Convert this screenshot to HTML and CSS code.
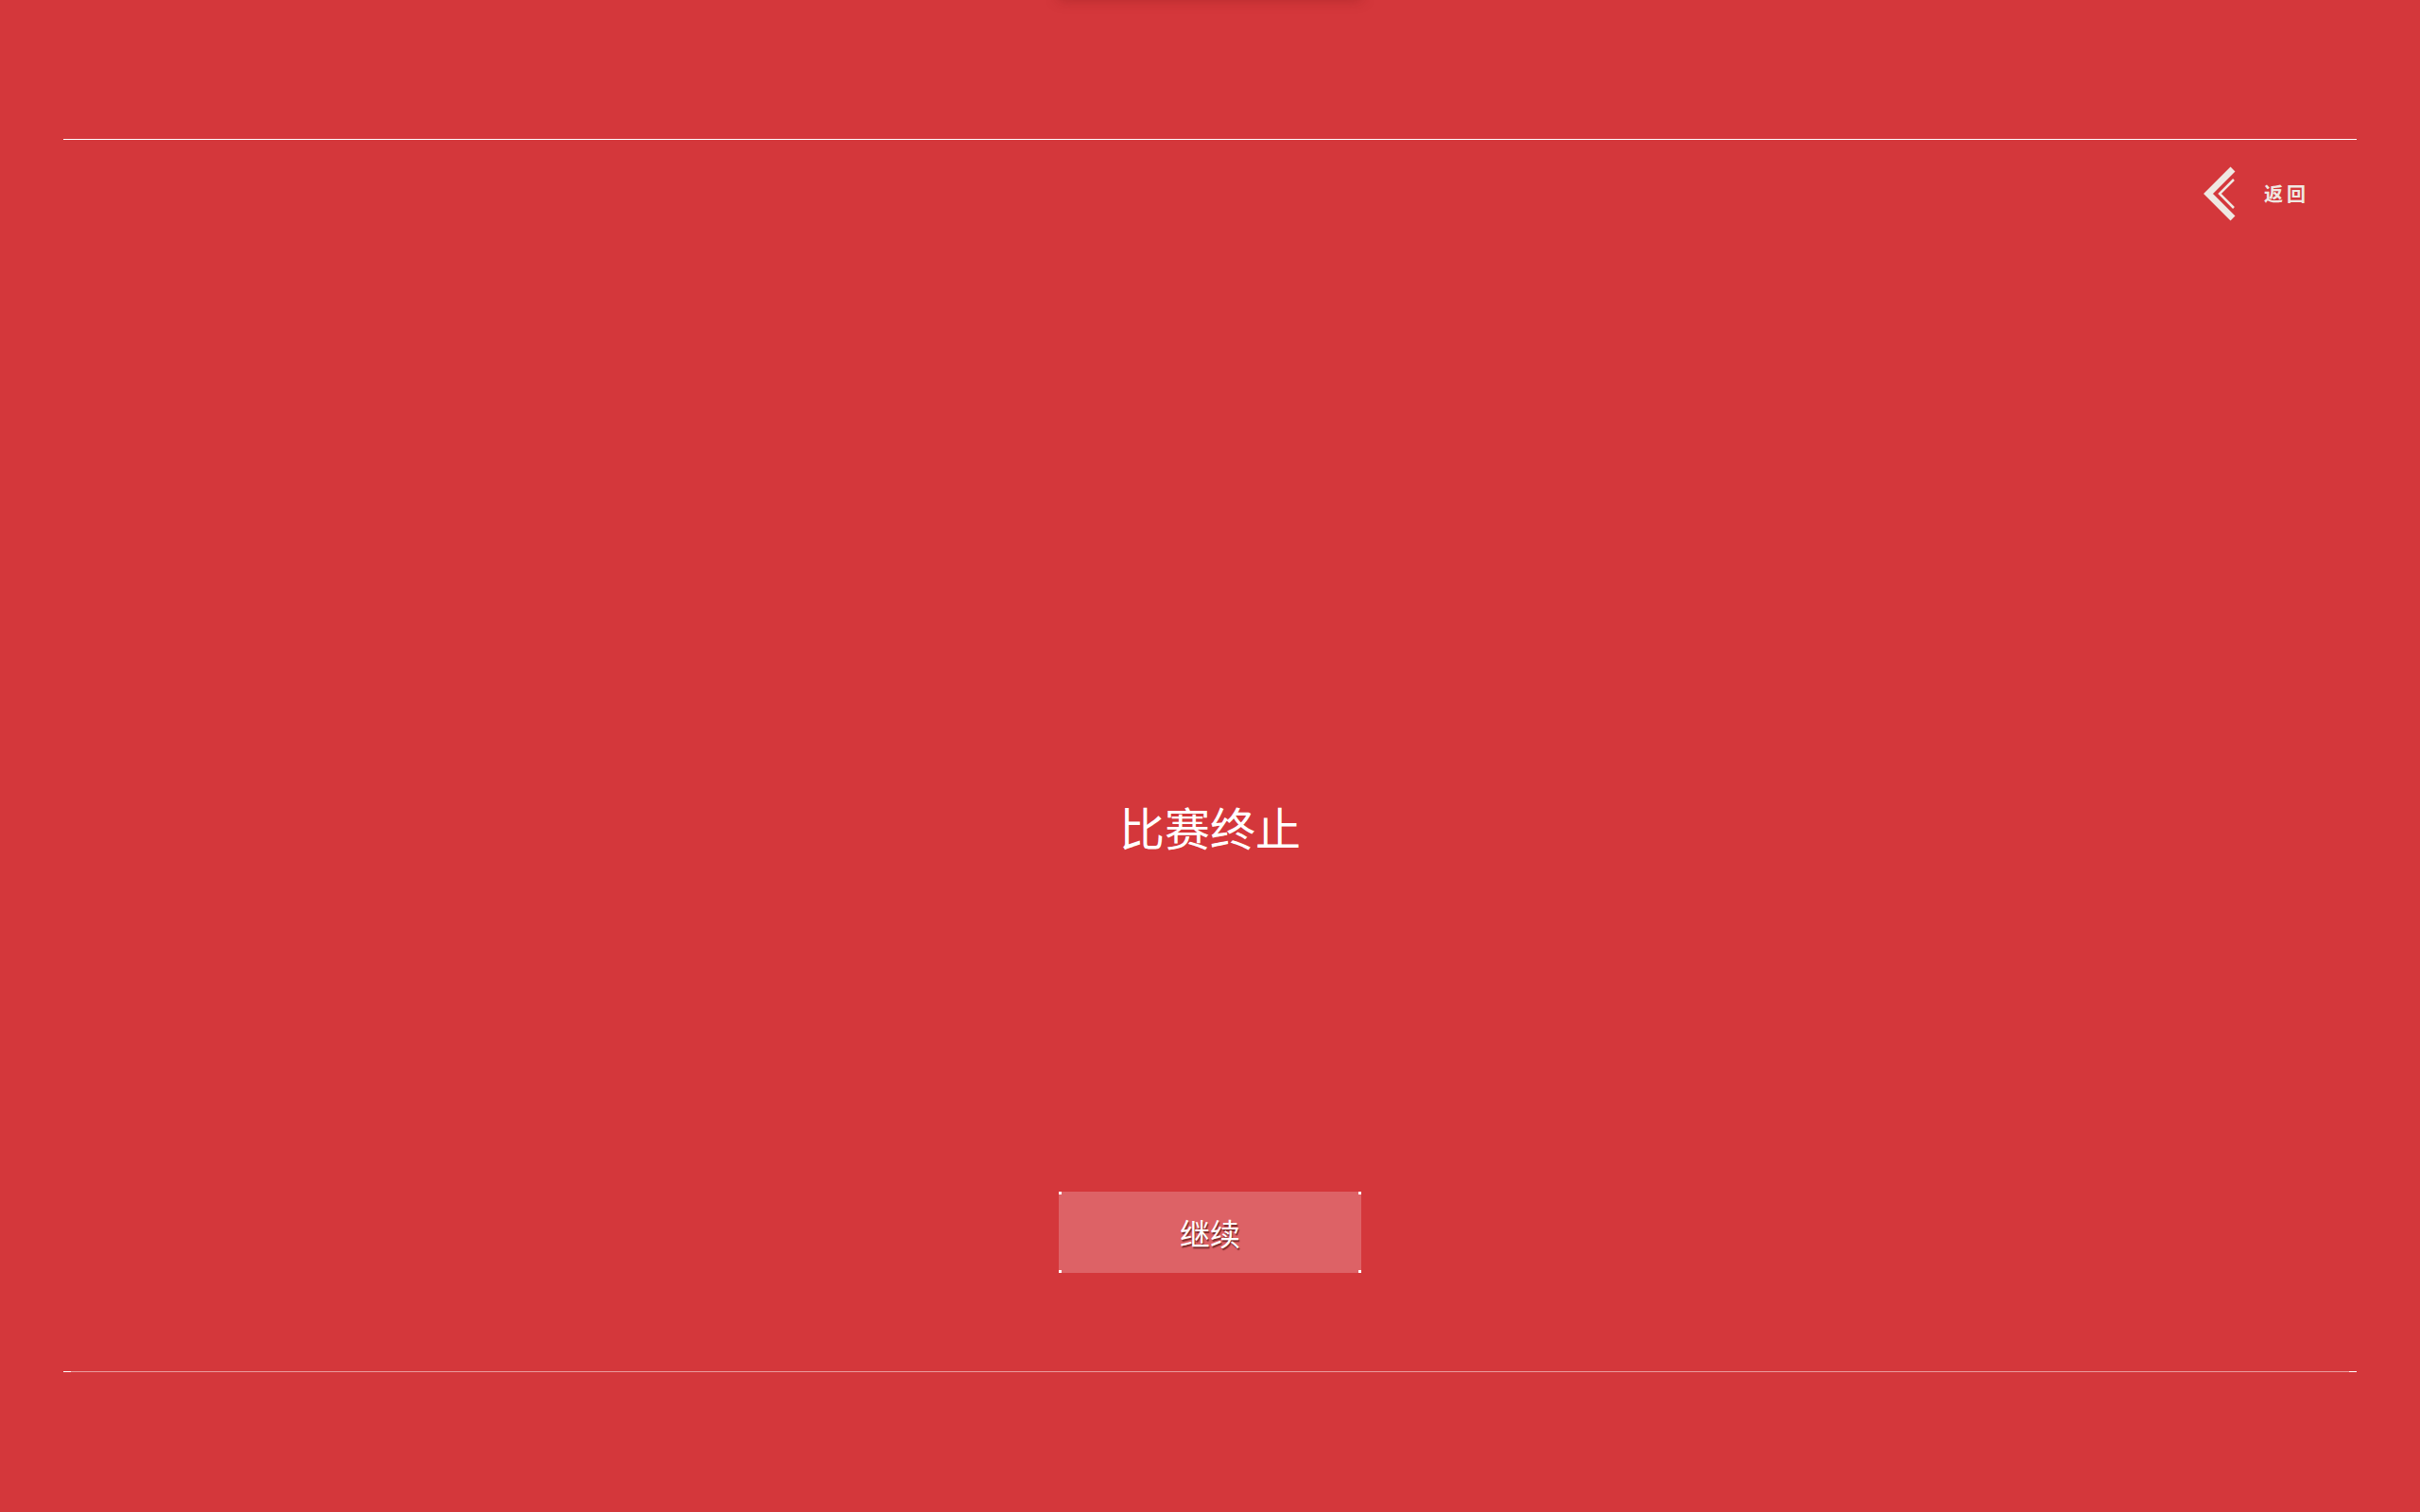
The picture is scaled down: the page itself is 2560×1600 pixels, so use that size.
FILE: index.html
```html
<!DOCTYPE html>
<html lang="zh">
<head>
<meta charset="utf-8">
<title>比赛终止</title>
<link rel="stylesheet" href="styles.css">
</head>
<body>
<div class="page">
  <div class="top">
    <div class="top-shadow"></div>
  </div>
  <div class="rule rule-top"></div>
  <div class="back-row">
    <a class="back">
      <svg class="back-icon" width="40" height="62" viewBox="0 0 40 62">
        <polyline points="34,5 8,31 34,57" fill="none" stroke="#efe8e2" stroke-width="7" stroke-linejoin="miter"/>
        <polyline points="35,16 20,31 35,46" fill="none" stroke="#efe8e2" stroke-width="2.5"/>
      </svg>
      <span class="back-text">返回</span>
    </a>
  </div>
  <h1 class="title">比赛终止</h1>
  <div class="actions">
    <button class="btn">继续
      <i class="dot tl"></i><i class="dot tr"></i><i class="dot bl"></i><i class="dot br"></i>
    </button>
  </div>
  <div class="rule rule-bottom"></div>
</div>
</body>
</html>
```
FILE: styles.css
```css
html, body {
  margin: 0;
  padding: 0;
  background: #d4373b;
  overflow: hidden;
}
.page {
  width: 2560px;
  height: 1600px;
  display: flex;
  flex-direction: column;
  font-family: "Noto Sans CJK SC", "Noto Sans", sans-serif;
  color: #fff;
}
.top {
  height: 147px;
  position: relative;
}
.top-shadow {
  position: absolute;
  left: 1120px;
  width: 320px;
  top: -40px;
  height: 40px;
  background: #d4373b;
  box-shadow: 0 0 14px rgba(120, 20, 20, 0.35);
}
.rule {
  height: 1px;
  margin: 0 67px;
  flex: none;
}
.rule-top {
  background: #fff;
}
.rule-bottom {
  background: linear-gradient(to right, #fff 0 8px, rgba(255,255,255,0.5) 8px calc(100% - 8px), #fff calc(100% - 8px));
  margin-top: 104px;
}
.back-row {
  display: flex;
  justify-content: flex-end;
  padding: 26px 117px 0 0;
}
.back {
  display: flex;
  align-items: center;
  gap: 27px;
}
.back-icon {
  display: block;
}
.back-text {
  font-size: 20px;
  font-weight: 700;
  letter-spacing: 4px;
  color: #efe8e2;
  line-height: 1;
}
.title {
  margin: 614px 0 0;
  font-size: 48px;
  line-height: 48px;
  font-weight: 400;
  text-align: center;
}
.actions {
  display: flex;
  justify-content: center;
  margin-top: 363px;
}
.btn {
  position: relative;
  width: 320px;
  height: 86px;
  border: none;
  background: rgba(255, 255, 255, 0.22);
  color: #fff;
  font-family: "Noto Sans CJK SC", "Noto Sans", sans-serif;
  font-size: 32px;
  text-shadow: 1px 2px 1px rgba(80, 20, 20, 0.7);
  padding: 0;
}
.dot {
  position: absolute;
  width: 3px;
  height: 3px;
  background: #fff;
}
.tl { left: 0; top: 0; }
.tr { right: 0; top: 0; }
.bl { left: 0; bottom: 0; }
.br { right: 0; bottom: 0; }
```
